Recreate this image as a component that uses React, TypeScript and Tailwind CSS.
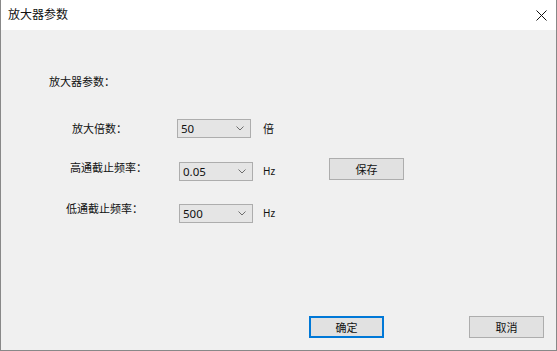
import React from "react";

const font = { fontFamily: '"Noto Sans", "Noto Sans CJK SC", sans-serif' };

function Chevron() {
  return (
    <svg width="8" height="5" viewBox="0 0 8 5" className="shrink-0">
      <polyline points="0.5,0.5 4,4 7.5,0.5" fill="none" stroke="#6d6d6d" strokeWidth="1" />
    </svg>
  );
}

function Combo({ value }: { value: string }) {
  return (
    <div className="flex items-center justify-between w-[74px] h-[19px] bg-[#e5e5e5] border border-[#adadad] pl-[3px] pr-[6px] text-[11.5px] leading-none text-[#111]">
      <span>{value}</span>
      <Chevron />
    </div>
  );
}

function Button({ label, primary }: { label: string; primary?: boolean }) {
  return (
    <button
      className={
        "w-[75px] h-[22px] bg-[#e1e1e1] text-[11px] leading-none text-[#111] " +
        (primary ? "border-2 border-[#0078d7]" : "border border-[#adadad]")
      }
    >
      {label}
    </button>
  );
}

export default function App() {
  return (
    <div
      className="w-[557px] h-[351px] flex flex-col border-x border-b border-[#888888] bg-[#f0f0f0] text-[#111]"
      style={font}
    >
      <div className="h-[30px] shrink-0 bg-white flex items-center justify-between pl-[7px] pr-[9px]">
        <span className="text-[12px] leading-none">放大器参数</span>
        <svg width="11" height="11" viewBox="0 0 11 11">
          <path d="M0.5 0.5 L10.5 10.5 M10.5 0.5 L0.5 10.5" stroke="#111" strokeWidth="1" />
        </svg>
      </div>

      <div className="flex-1 flex flex-col">
        <div className="mt-[44px] ml-[48px] h-[16px] leading-[16px] text-[11px]">放大器参数：</div>

        <div className="mt-[29px] flex items-center h-[19px]">
          <span className="ml-[71px] w-[105px] text-[11px] leading-[16px]">放大倍数：</span>
          <Combo value="50" />
          <span className="ml-[12px] text-[11px] leading-[16px]">倍</span>
        </div>

        <div className="mt-[20px] flex items-start h-[23px]">
          <span className="ml-[69px] w-[109px] mt-[2px] text-[11px] leading-[16px]">高通截止频率：</span>
          <div className="mt-[4px]">
            <Combo value="0.05" />
          </div>
          <span className="ml-[10px] w-[66px] mt-[5px] text-[10px] leading-[16px]">Hz</span>
          <Button label="保存" />
        </div>

        <div className="mt-[20px] flex items-start h-[23px]">
          <span className="ml-[65px] w-[113px] text-[11px] leading-[16px]">低通截止频率：</span>
          <div className="mt-[3px]">
            <Combo value="500" />
          </div>
          <span className="ml-[10px] mt-[4px] text-[10px] leading-[16px]">Hz</span>
        </div>

        <div className="mt-auto flex justify-end gap-[85px] pr-[12px] pb-[12px]">
          <Button label="确定" primary />
          <Button label="取消" />
        </div>
      </div>
    </div>
  );
}
